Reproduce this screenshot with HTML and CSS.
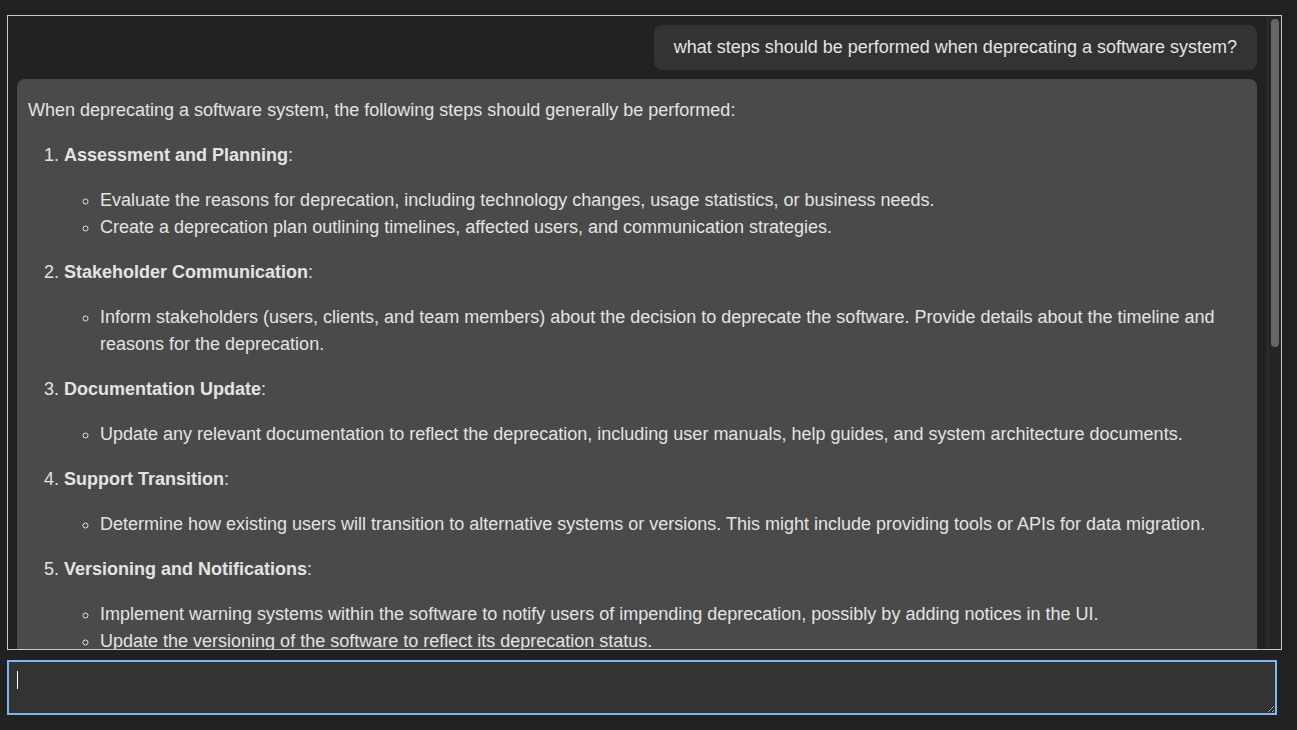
FILE: index.html
```html
<!DOCTYPE html>
<html>
<head>
<title>Chat</title>
<link rel="stylesheet" href="styles.css">
</head>
<body>
<div class="app">
	<div class="frame">
		<div class="chat">
			<div class="msg user">what steps should be performed when deprecating a software system?</div>
			<div class="msg bot">
				<p>When deprecating a software system, the following steps should generally be performed:</p>
				<ol>
					<li>
						<p><strong>Assessment and Planning</strong>:</p>
						<ul>
							<li>Evaluate the reasons for deprecation, including technology changes, usage statistics, or business needs.</li>
							<li>Create a deprecation plan outlining timelines, affected users, and communication strategies.</li>
						</ul>
					</li>
					<li>
						<p><strong>Stakeholder Communication</strong>:</p>
						<ul>
							<li>Inform stakeholders (users, clients, and team members) about the decision to deprecate the software. Provide details about the timeline and reasons for the deprecation.</li>
						</ul>
					</li>
					<li>
						<p><strong>Documentation Update</strong>:</p>
						<ul>
							<li>Update any relevant documentation to reflect the deprecation, including user manuals, help guides, and system architecture documents.</li>
						</ul>
					</li>
					<li>
						<p><strong>Support Transition</strong>:</p>
						<ul>
							<li>Determine how existing users will transition to alternative systems or versions. This might include providing tools or APIs for data migration.</li>
						</ul>
					</li>
					<li>
						<p><strong>Versioning and Notifications</strong>:</p>
						<ul>
							<li>Implement warning systems within the software to notify users of impending deprecation, possibly by adding notices in the UI.</li>
							<li>Update the versioning of the software to reflect its deprecation status.</li>
						</ul>
					</li>
				</ol>
			</div>
		</div>
		<div class="scrollbar"><div class="thumb"></div></div>
	</div>
	<div class="input-wrap">
		<textarea class="input" autofocus></textarea>
		<span class="caret"></span>
	</div>
</div>
</body>
</html>
```

FILE: styles.css
```css
html, body { margin: 0; height: 100%; }
body { background-color: #212121; color: #e3e3e3; font-family: "Liberation Sans", Arial, sans-serif; font-size: 18px; line-height: 1.5; }
.app { box-sizing: border-box; height: 100vh; display: flex; flex-direction: column; gap: 10px; padding: 15px 15px 15px 7px; }
.frame { flex: 1; min-height: 0; display: flex; border: 1px solid #c9c9c9; background-color: #222; }
.chat { flex: 1; min-width: 0; overflow: hidden; padding: 9px 10px 0 9px; display: flex; flex-direction: column; gap: 9px; }
.scrollbar { flex: none; width: 10px; padding: 3px 0 0 3px; background-color: #252525; border-left: 1px solid #2f2f2f; }
.thumb { width: 8px; height: 328px; background-color: #666; border-radius: 4px; }
.msg { border-radius: 8px; }
.user { align-self: flex-end; background-color: #333; padding: 9px 20px; }
.bot { background-color: #4a4a4a; padding: 0 10px 0 11px; }
.bot p { margin: 18px 0; }
.bot ol, .bot ul { padding-left: 2em; margin: 18px 0; }
.input-wrap { position: relative; flex: none; height: 55px; margin-right: 5px; display: flex; }
.input { flex: 1; resize: vertical; box-sizing: border-box; background-color: #333; color: #eee; border: 2px solid #80b4f4; outline: none; padding: 8px; font-family: "Liberation Sans", Arial, sans-serif; font-size: 15px; caret-color: #fff; }
.caret { position: absolute; left: 10px; top: 11px; width: 1px; height: 18px; background-color: #fff; }
```
